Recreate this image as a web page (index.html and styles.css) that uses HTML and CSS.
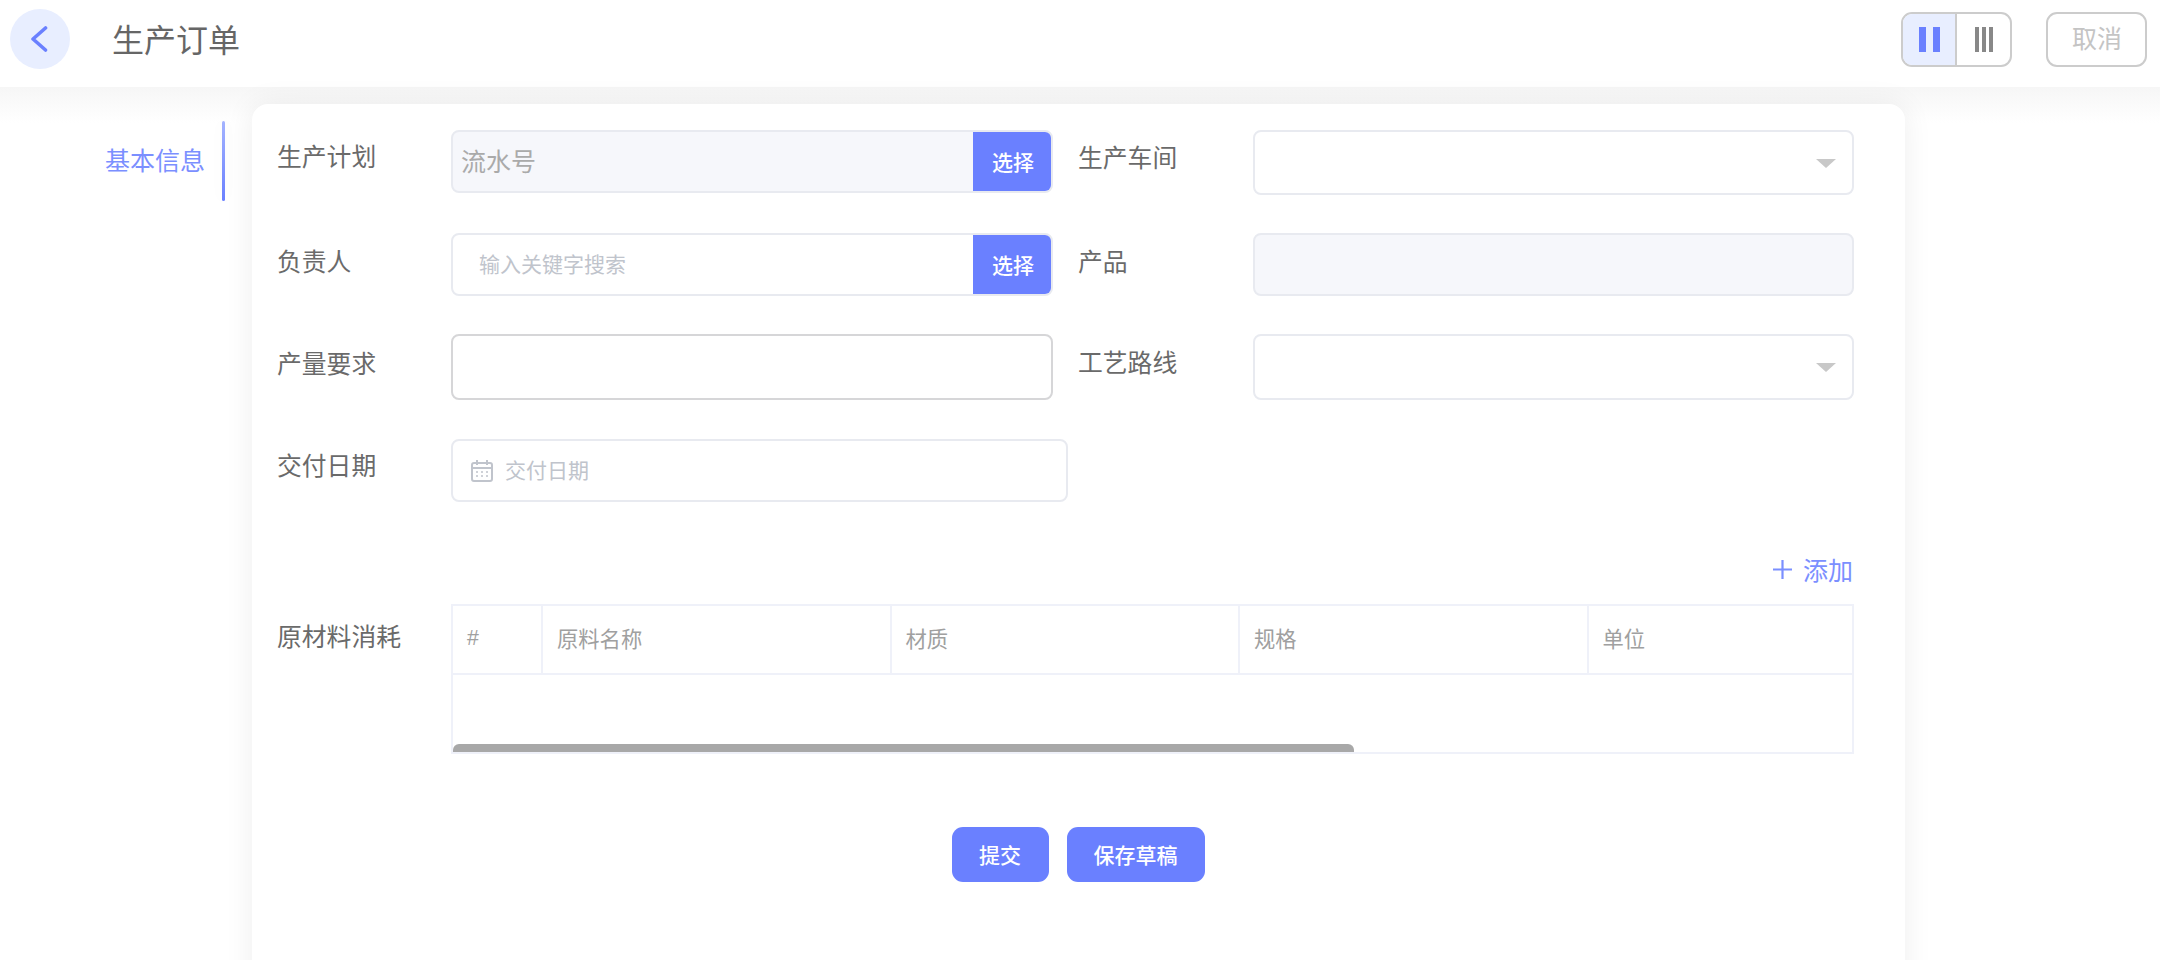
FILE: index.html
```html
<!DOCTYPE html>
<html lang="zh-CN">
<head>
<meta charset="utf-8">
<title>生产订单</title>
<link rel="stylesheet" href="styles.css">
</head>
<body>
<header class="topbar">
  <button class="back" aria-label="返回">
    <svg width="18" height="26" viewBox="0 0 18 26"><path d="M15.5 2 3 13l12.5 11" fill="none" stroke="#6a80ff" stroke-width="3.6" stroke-linecap="round" stroke-linejoin="round"/></svg>
  </button>
  <h1 class="title">生产订单</h1>
  <div class="toggle">
    <div class="toggle-cell active"><i class="bar-wide"></i><i class="bar-wide"></i></div>
    <div class="toggle-cell"><i class="bar-thin"></i><i class="bar-thin"></i><i class="bar-thin"></i></div>
  </div>
  <button class="cancel">取消</button>
</header>
<main class="main">
  <nav class="side"><a class="tab">基本信息</a></nav>
  <section class="card">
    <div class="form">
      <div class="field">
        <label class="label label-high">生产计划</label>
        <div class="control group disabled h62"><span class="value">流水号</span><button class="pick">选择</button></div>
      </div>
      <div class="field">
        <label class="label label-right-top">生产车间</label>
        <div class="control select h64"><i class="caret"></i></div>
      </div>
      <div class="field">
        <label class="label">负责人</label>
        <div class="control group h63"><span class="placeholder search">输入关键字搜索</span><button class="pick">选择</button></div>
      </div>
      <div class="field">
        <label class="label">产品</label>
        <div class="control disabled h63"></div>
      </div>
      <div class="field">
        <label class="label label-low">产量要求</label>
        <div class="control strong h65"></div>
      </div>
      <div class="field">
        <label class="label">工艺路线</label>
        <div class="control select h65"><i class="caret"></i></div>
      </div>
      <div class="field">
        <label class="label label-date">交付日期</label>
        <div class="control date h63">
          <svg class="cal" width="22" height="22" viewBox="0 0 22 22" fill="none" stroke="#c0c4cc" stroke-width="2"><rect x="1" y="3" width="20" height="18" rx="2"/><path d="M1 8h20M6 0v5M16 0v5"/><path d="M5 12h2M10 12h2M15 12h2M5 16h2M10 16h2M15 16h2" stroke-width="1.6"/></svg>
          <span class="placeholder">交付日期</span>
        </div>
      </div>
    </div>
    <div class="add-row"><a class="add"><svg width="21" height="21" viewBox="0 0 21 21"><path d="M10.5 1v19M1 10.5h19" stroke="#7b8fff" stroke-width="2.2"/></svg>添加</a></div>
    <div class="table-row">
      <label class="label table-label">原材料消耗</label>
      <div class="table">
        <div class="thead">
          <div class="th th-index">#</div>
          <div class="th">原料名称</div>
          <div class="th">材质</div>
          <div class="th">规格</div>
          <div class="th">单位</div>
        </div>
        <div class="tbody"><div class="thumb"></div></div>
      </div>
    </div>
    <div class="actions">
      <button class="primary">提交</button>
      <button class="primary">保存草稿</button>
    </div>
  </section>
</main>
</body>
</html>
```

FILE: styles.css
```css
* { box-sizing: border-box; }
html, body { margin: 0; height: 960px; overflow: hidden; }
body {
  background: #fff;
  font-family: "Noto Sans CJK SC", "Noto Sans", sans-serif;
  color: #666;
}
button { font-family: inherit; padding: 0; cursor: pointer; }

.topbar {
  height: 87px;
  background: #fff;
  display: flex;
  align-items: center;
  padding: 0 13px 0 10px;
}
.back {
  width: 60px;
  height: 60px;
  border: 0;
  border-radius: 50%;
  background: #e8eeff;
  display: flex;
  align-items: center;
  justify-content: center;
  margin-top: -9px;
  padding-right: 2px;
}
.title {
  margin: -12px 0 0 42px;
  font-size: 32px;
  font-weight: 400;
  line-height: 44px;
  color: #666;
}
.toggle {
  margin: -9px 0 0 auto;
  width: 111px;
  height: 55px;
  border: 2px solid #ccc;
  border-radius: 11px;
  display: flex;
  overflow: hidden;
}
.toggle-cell {
  flex: 1;
  display: flex;
  align-items: center;
  justify-content: center;
}
.toggle-cell.active {
  flex: 0 0 54px;
  background: #e8eeff;
  border-right: 2px solid #ccc;
  gap: 7px;
}
.toggle-cell:not(.active) { gap: 3px; }
.bar-wide { width: 7px; height: 25px; background: #6a80ff; }
.bar-thin { width: 4px; height: 25px; background: #888; }
.cancel {
  margin: -9px 0 0 34px;
  width: 101px;
  height: 55px;
  border: 2px solid #ccc;
  border-radius: 11px;
  background: #fff;
  color: #c4c4c4;
  font-size: 25px;
  padding: 0 0 4px 1px;
}

.main {
  height: 873px;
  display: flex;
  background: linear-gradient(#f6f6f6, #fff 36px);
  padding-top: 17px;
}
.side {
  width: 252px;
  flex: none;
  padding: 17px 27px 0 0;
  display: flex;
  justify-content: flex-end;
  align-items: flex-start;
}
.tab {
  height: 80px;
  display: flex;
  align-items: center;
  padding: 0 20px 4px 0;
  font-size: 25px;
  color: #7b8fff;
  position: relative;
}
.tab::after {
  content: "";
  position: absolute;
  right: 0;
  top: 0;
  bottom: 0;
  width: 3px;
  border-radius: 2px;
  background: linear-gradient(#a4b3ff, #6a80ff);
  box-shadow: 0 0 14px rgba(0, 0, 0, .05);
}
.card {
  width: 1653px;
  flex: none;
  height: 900px;
  background: #fff;
  border-radius: 16px;
  box-shadow: 0 0 30px rgba(0, 0, 0, .07);
  padding: 26px 51px 0 25px;
}

.form {
  display: grid;
  grid-template-columns: 775px 775px;
  grid-template-rows: 103px 101px 105px 63px;
  column-gap: 26px;
  width: 1577px;
}
.field { display: flex; align-items: flex-start; }
.label {
  width: 175px;
  flex: none;
  font-size: 24.8px;
  line-height: 36px;
  color: #6a6a6a;
  padding-top: 9px;
}
.label-high { padding-top: 7px; }
.label-right-top { padding-top: 8px; }
.label-low { padding-top: 10px; }
.label-date { padding-top: 7px; }
.field:nth-child(odd) .label { width: 174px; }

.control {
  width: 601px;
  flex: none;
  border: 2px solid #e8eaf0;
  border-radius: 8px;
  background: #fff;
  display: flex;
  align-items: center;
  position: relative;
}
.field:nth-child(odd) .control { width: 602px; }
.h62 { height: 63px; }
.h63 { height: 63px; }
.h64 { height: 65px; }
.h65 { height: 66px; }
.disabled { background: #f6f7fb; }
.strong { border-color: #d6d6d8; }
.group { overflow: hidden; }
.value {
  flex: 1;
  padding: 0 0 4px 8px;
  font-size: 25px;
  color: #aaa;
}
.placeholder { font-size: 21px; color: #c0c4cc; padding-bottom: 4px; }
.search { flex: 1; padding-left: 26px; }
.pick {
  width: 80px;
  height: 63px;
  flex: none;
  margin-right: -2px;
  border: 0;
  background: #6a80ff;
  color: #fff;
  font-size: 21px;
  font-weight: 500;
  padding-bottom: 2px;
}
.caret {
  position: absolute;
  right: 16px;
  top: 50%;
  margin-top: -4px;
  width: 0;
  height: 0;
  border-left: 10px solid transparent;
  border-right: 10px solid transparent;
  border-top: 9px solid #c8c8c8;
}
.field:nth-child(odd) .control.date { width: 617px; padding-left: 18px; gap: 12px; }
.cal { flex: none; }

.add-row {
  display: flex;
  justify-content: flex-end;
  margin-top: 49px;
  padding-right: 1px;
}
.add {
  display: flex;
  align-items: center;
  gap: 10px;
  font-size: 25px;
  line-height: 36px;
  color: #7b8fff;
}
.table-row { display: flex; margin-top: 17px; }
.label.table-label { width: 174px; padding-top: 13px; }
.table {
  width: 1403px;
  flex: none;
  height: 150px;
  border: 2px solid #eff1f9;
}
.thead {
  height: 69px;
  display: grid;
  grid-template-columns: 90px repeat(3, 348.5px) 1fr;
  border-bottom: 2px solid #eff1f9;
}
.th {
  display: flex;
  align-items: center;
  padding: 0 0 5px 14px;
  font-size: 21.3px;
  color: #a0a0a0;
  border-right: 2px solid #eff1f9;
}
.th:last-child { border-right: 0; }
.th-index { font-family: "Liberation Sans", sans-serif; padding-bottom: 3px; }
.tbody { height: 77px; display: flex; align-items: flex-end; }
.thumb {
  width: 901px;
  height: 8px;
  background: #a8a8a8;
  border-radius: 6px 6px 0 0;
}

.actions {
  display: flex;
  justify-content: center;
  gap: 18px;
  margin-top: 73px;
  padding-left: 25px;
}
.primary {
  height: 55px;
  width: 97px;
  border: 0;
  border-radius: 11px;
  background: #6a80ff;
  color: #fff;
  font-size: 21px;
  font-weight: 500;
  padding-bottom: 2px;
}
.primary:last-child { width: 138px; }
```
